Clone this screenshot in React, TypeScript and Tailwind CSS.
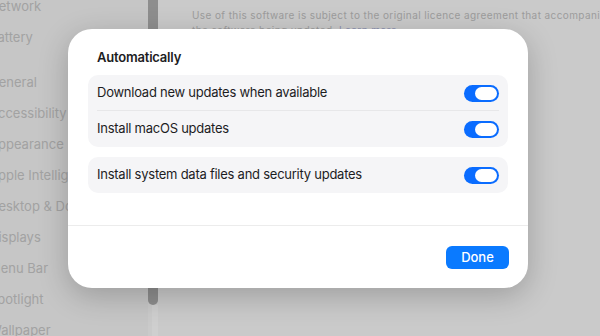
import React from "react";

const sidebarItems: { label: string; gap?: boolean }[] = [
  { label: "Network" },
  { label: "Battery" },
  { label: "General", gap: true },
  { label: "Accessibility" },
  { label: "Appearance" },
  { label: "Apple Intelligence & Siri" },
  { label: "Desktop & Dock" },
  { label: "Displays" },
  { label: "Menu Bar" },
  { label: "Spotlight" },
  { label: "Wallpaper" },
];

function Toggle() {
  return (
    <div className="w-[35px] h-[17px] rounded-full bg-[#0a6cff] flex items-center justify-end pr-[2px]">
      <div className="w-[22px] h-[13px] rounded-full bg-white" />
    </div>
  );
}

function Row({ label, divider }: { label: string; divider?: boolean }) {
  return (
    <div className="relative h-[36px] flex items-center justify-between pl-[9px] pr-[9px]">
      <span className="text-[13px] tracking-[-0.25px] text-[#1d1d1f]">{label}</span>
      <Toggle />
      {divider && (
        <div className="absolute left-[9px] right-[9px] bottom-0 h-px bg-[#e7e7e9]" />
      )}
    </div>
  );
}

export default function App() {
  return (
    <div className="relative w-[600px] h-[336px] overflow-hidden flex bg-[#cacaca] font-['Inter',sans-serif]">
      {/* sidebar */}
      <aside className="w-[148px] shrink-0 bg-[#c6c6c6] overflow-hidden">
        <ul className="-ml-[11px] -mt-[9px]">
          {sidebarItems.map((item) => (
            <li
              key={item.label}
              className={`h-[31px] flex items-center text-[13px] text-[#a2a2a2] whitespace-nowrap ${
                item.gap ? "mt-[14px]" : ""
              }`}
            >
              {item.label}
            </li>
          ))}
        </ul>
      </aside>

      {/* scrollbar */}
      <div className="w-[12px] shrink-0 flex flex-col">
        <div className="w-[10px] h-[305px] rounded-b-full bg-[#8e8e8e]" />
        <div className="ml-[4px] w-[6px] flex-1 bg-[#cfcfcf]" />
      </div>

      {/* content */}
      <main className="flex-1 min-w-0 overflow-hidden pl-[32px] pt-[8px] text-[10px] leading-[15px] tracking-[0.4px] text-[#9c9c9c] whitespace-nowrap">
        <p>Use of this software is subject to the original licence agreement that accompanies</p>
        <p>
          the software being updated. <span className="text-[#8a90b0]">Learn more</span>.
        </p>
      </main>

      {/* sheet */}
      <div className="absolute left-[68px] top-[29px] w-[460px] h-[259px] rounded-[24px] bg-white shadow-[0_8px_30px_rgba(0,0,0,0.22)] flex flex-col">
        <div className="pt-[20px] px-[20px] pb-[32px]">
          <h2 className="h-[16px] ml-[9px] mb-[10px] text-[13px] leading-[16px] font-semibold tracking-[-0.2px] text-[#1d1d1f]">
            Automatically
          </h2>
          <div className="rounded-[10px] bg-[#f5f5f7]">
            <Row label="Download new updates when available" divider />
            <Row label="Install macOS updates" />
          </div>
          <div className="mt-[10px] rounded-[10px] bg-[#f5f5f7]">
            <Row label="Install system data files and security updates" />
          </div>
        </div>
        <div className="h-px bg-[#ececec]" />
        <div className="flex justify-end pt-[20px] pb-[19px] pr-[19px]">
          <button className="w-[63px] h-[23px] rounded-[6px] bg-[#0a7aff] text-white text-[13px] font-medium">
            Done
          </button>
        </div>
      </div>
    </div>
  );
}
